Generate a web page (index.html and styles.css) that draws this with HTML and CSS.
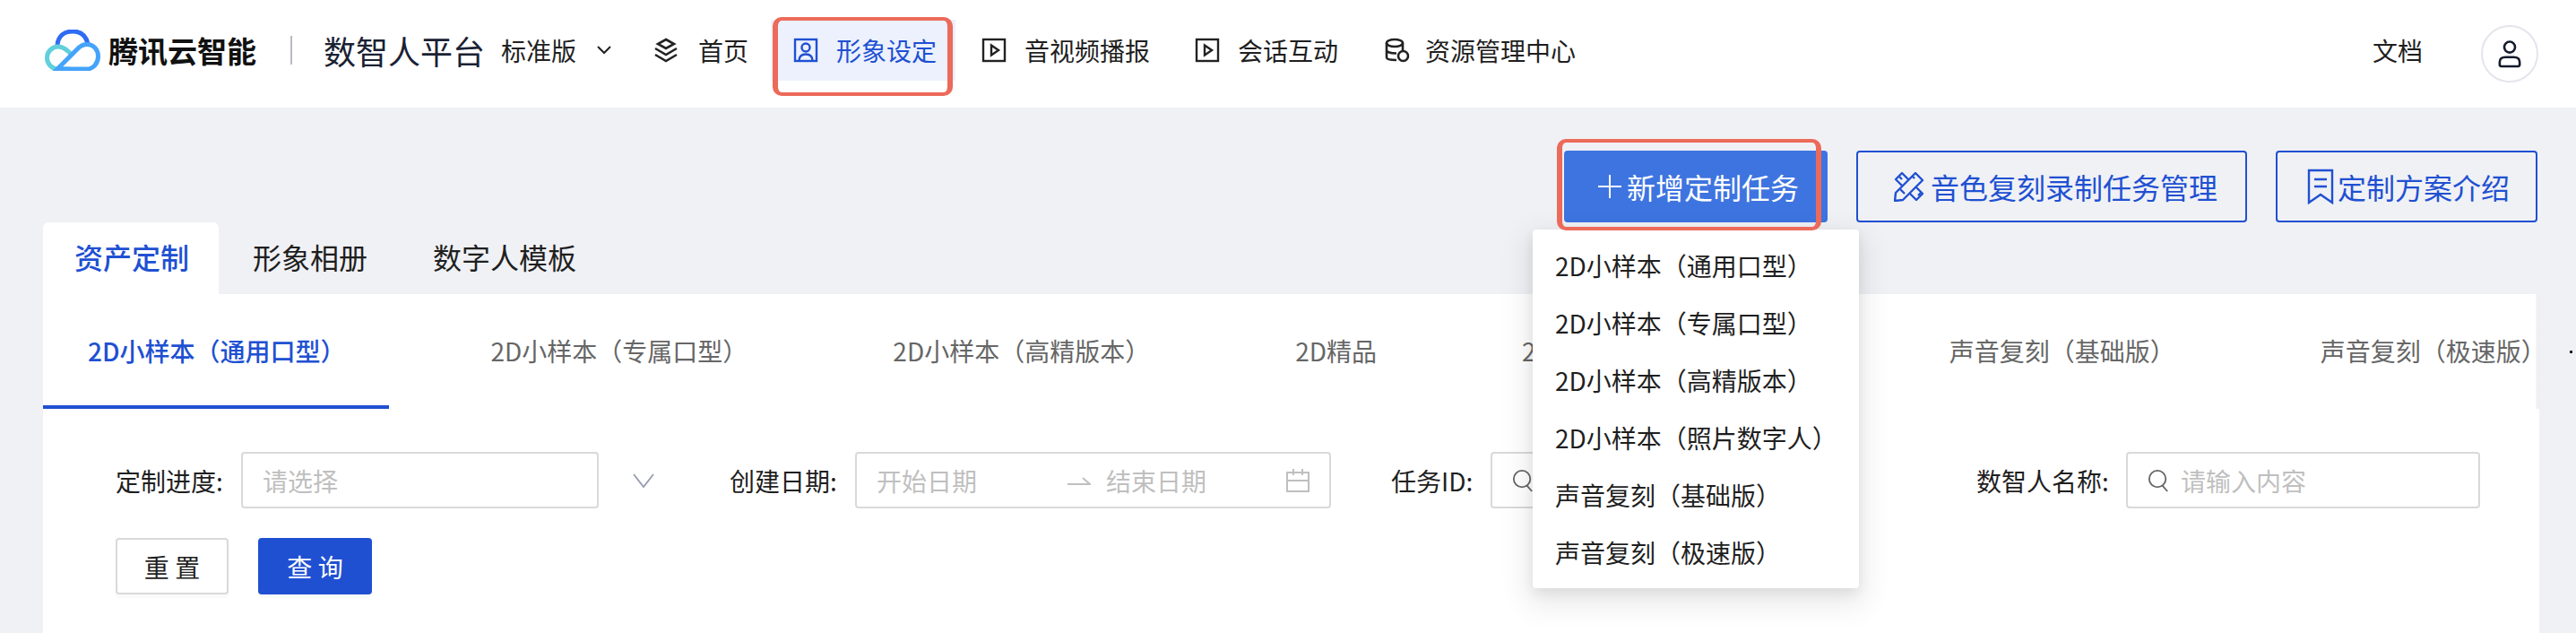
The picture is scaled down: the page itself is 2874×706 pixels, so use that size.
FILE: index.html
```html
<!DOCTYPE html>
<html lang="zh-CN">
<head>
    <meta charset="UTF-8">
    <title>数智人平台 - 形象设定</title>
    <link rel="stylesheet" href="styles.css">
</head>
<body>
    <!-- Top navigation -->
    <header class="topbar">
        <div class="brand">
            <svg class="brand-logo" viewBox="0 0 62 46" width="62" height="46">
                <path d="M14 17C15 7 22 2 31 2s15 5 17 14" fill="none" stroke="#2f6cf3" stroke-width="5"/>
                <path d="M28 44H15C8 44 2.500 38.500 2.500 31.500S8 19 15 19c6 0 10 4 14 8" fill="none" stroke="#62cfdc" stroke-width="5"/>
                <path d="M14 44 37 21c3-3 6-4.500 10-4.500 7.500 0 12.500 6 12.500 13.500S54 44 47 44H14z" fill="none" stroke="#45a3fb" stroke-width="5"/>
            </svg>
            <span class="brand-name">腾讯云智能</span>
            <span class="brand-sep"></span>
            <span class="brand-product">数智人平台</span>
            <span class="brand-edition">标准版</span>
            <svg class="brand-caret" viewBox="0 0 16 10" width="16" height="10"><path d="M1 1l7 7 7-7" fill="none" stroke="#222" stroke-width="2"/></svg>
        </div>
        <nav class="nav">
            <a class="nav-item nav-home">
                <svg viewBox="0 0 28 28" width="28" height="28" fill="none" stroke="#222" stroke-width="2.600"><path d="M14 2l9 5-9 5-9-5z"/><path d="M2 12l12 7 12-7M2 19l12 7 12-7"/></svg>
                首页
            </a>
            <a class="nav-item nav-active">
                <svg viewBox="0 0 28 28" width="28" height="28" fill="none" stroke="#2050d2" stroke-width="2.400"><rect x="2" y="2" width="24" height="24"/><circle cx="14" cy="11" r="4.500"/><path d="M6.500 26c0-5 3-7.500 7.500-7.500s7.500 2.500 7.500 7.500"/></svg>
                形象设定
            </a>
            <a class="nav-item nav-media">
                <svg viewBox="0 0 28 28" width="28" height="28" fill="none" stroke="#222" stroke-width="2.400"><rect x="2" y="2" width="24" height="24"/><path d="M11 8.500l8 5.500-8 5.500z"/></svg>
                音视频播报
            </a>
            <a class="nav-item nav-chat">
                <svg viewBox="0 0 28 28" width="28" height="28" fill="none" stroke="#222" stroke-width="2.400"><rect x="2" y="2" width="24" height="24"/><path d="M11 8.500l8 5.500-8 5.500z"/></svg>
                会话互动
            </a>
            <a class="nav-item nav-assets">
                <svg viewBox="0 0 28 28" width="28" height="28" fill="none" stroke="#222" stroke-width="2.600"><ellipse cx="11" cy="6" rx="9" ry="4"/><path d="M2 6v16c0 2 3 3 11 3M20 6v8M2 14c0 2 4 3.500 11 3.500"/><circle cx="20.500" cy="20.500" r="5.500"/></svg>
                资源管理中心
            </a>
        </nav>
        <a class="doc-link">文档</a>
        <div class="avatar">
            <svg viewBox="0 0 28 34" width="26" height="32" fill="none" stroke="#141b2d" stroke-width="2.800"><circle cx="14" cy="9" r="6.500"/><path d="M4 32h20c1.500 0 2-1 2-2v-3c0-4-3-6-7-6H9c-4 0-7 2-7 6v3c0 1 .500 2 2 2z"/></svg>
        </div>
    </header>

    <main class="page">
        <!-- Action buttons -->
        <div class="actions">
            <button class="action-btn action-primary">
                <svg viewBox="0 0 26 26" width="26" height="26"><path d="M13 0v26M0 13h26" stroke="#fff" stroke-width="2" fill="none"/></svg>
                新增定制任务
            </button>
            <button class="action-btn action-repair">
                <svg viewBox="0 0 34 34" width="34" height="34" fill="none" stroke="#2050d2" stroke-width="2.400" stroke-linejoin="round">
                    <path d="M9.500 16.500 2 9l7-7 7.500 7.500M17.500 24.500 25 32l7-7-7.500-7.500"/>
                    <path d="M2 24 24 2l8 8-22 22-9 1z"/>
                    <path d="M6 6l3 3M27 27l3-3M7 20l5 5M21 6l2 2"/>
                </svg>
                音色复刻录制任务管理
            </button>
            <button class="action-btn action-intro">
                <svg viewBox="0 0 30 40" width="30" height="40" fill="none" stroke="#2050d2" stroke-width="2.400"><path d="M2 2h26v36l-13-9-13 9z"/><path d="M8 12h14M8 20h14"/></svg>
                定制方案介绍
            </button>
        </div>

        <!-- Outer tabs -->
        <div class="tabs">
            <a class="tab tab-active">资产定制</a>
            <a class="tab tab-album">形象相册</a>
            <a class="tab">数字人模板</a>
        </div>

        <section class="card">
            <div class="subtabs">
                <a class="subtab subtab-active">2D小样本（通用口型）</a>
                <a class="subtab">2D小样本（专属口型）</a>
                <a class="subtab">2D小样本（高精版本）</a>
                <a class="subtab">2D精品</a>
                <a class="subtab">2D小样本（照片数字人）</a>
                <a class="subtab">声音复刻（基础版）</a>
                <a class="subtab">声音复刻（极速版）</a>
                <span class="subtabs-more"></span>
            </div>

            <!-- Filter form -->
            <form class="filters">
                <div class="filter-row">
                    <label class="field field-progress">
                        <span class="field-label">定制进度:</span>
                        <span class="control control-select"><span class="placeholder">请选择</span></span>
                        <svg class="select-caret" viewBox="0 0 24 16" width="24" height="16"><path d="M1 1l11 14L23 1" fill="none" stroke="#9aa0b0" stroke-width="2"/></svg>
                    </label>
                    <label class="field field-date">
                        <span class="field-label">创建日期:</span>
                        <span class="control control-range">
                            <span class="placeholder range-start">开始日期</span>
                            <svg class="range-arrow" viewBox="0 0 26 10" width="26" height="10"><path d="M0 9h25L17 2" fill="none" stroke="#bfbfbf" stroke-width="2"/></svg>
                            <span class="placeholder range-end">结束日期</span>
                            <svg class="range-cal" viewBox="0 0 26 26" width="26" height="26" fill="none" stroke="#bfbfbf" stroke-width="2"><rect x="1" y="4" width="24" height="21"/><path d="M1 13h24M8 0v7M18 0v7"/></svg>
                        </span>
                    </label>
                    <label class="field field-task">
                        <span class="field-label">任务ID:</span>
                        <span class="control control-search">
                            <svg viewBox="0 0 26 28" width="24" height="26" fill="none" stroke="#666" stroke-width="2"><circle cx="12" cy="12" r="10"/><path d="M18 20l6 7"/></svg>
                            <span class="placeholder">请输入内容</span>
                        </span>
                    </label>
                    <label class="field field-name">
                        <span class="field-label">数智人名称:</span>
                        <span class="control control-search">
                            <svg viewBox="0 0 26 28" width="24" height="26" fill="none" stroke="#666" stroke-width="2"><circle cx="12" cy="12" r="10"/><path d="M18 20l6 7"/></svg>
                            <span class="placeholder">请输入内容</span>
                        </span>
                    </label>
                </div>
                <div class="filter-buttons">
                    <button type="button" class="form-btn">重 置</button>
                    <button type="button" class="form-btn form-btn-primary">查 询</button>
                </div>
            </form>
        </section>
    </main>

    <!-- Overlays: dropdown menu and the red annotation boxes -->
    <ul class="menu">
        <li>2D小样本（通用口型）</li>
        <li>2D小样本（专属口型）</li>
        <li>2D小样本（高精版本）</li>
        <li>2D小样本（照片数字人）</li>
        <li>声音复刻（基础版）</li>
        <li>声音复刻（极速版）</li>
    </ul>
    <div class="mark mark-nav"></div>
    <div class="mark mark-add"></div>
</body>
</html>
```

FILE: styles.css
```css
:root {
    --blue: #2050d2;
    --page-bg: #f0f1f5;
    --text: #1f1f1f;
    --line: #d9d9d9;
    --mark: #ec6a5a;
}

* {
    box-sizing: border-box;
}

html, body {
    height: 100%;
}

body {
    margin: 0;
    overflow: hidden;
    position: relative;
    background-color: var(--page-bg);
    color: var(--text);
    font-family: "Noto Sans CJK SC", "Noto Sans", sans-serif;
    font-size: 28px;
    line-height: 40px;
}

/* Top navigation */
.topbar {
    display: flex;
    align-items: center;
    height: 120px;
    padding: 0 42px 8px 50px;
    background-color: #fff;
}

.brand {
    display: flex;
    align-items: center;
    width: 679px;
}

.brand-logo {
    flex: none;
}

.brand-name {
    margin-left: 9px;
    font-size: 33px;
    font-weight: 700;
    color: #111;
}

.brand-sep {
    width: 2px;
    height: 32px;
    margin: 0 35px 0 38px;
    background-color: #b9bbc0;
}

.brand-product {
    font-size: 36px;
    color: #1a2233;
}

.brand-edition {
    margin-left: 18px;
    color: #222;
}

.brand-caret {
    margin-left: 23px;
}

.nav {
    display: flex;
    align-items: center;
    height: 68px;
    flex: 1;
}

.nav-item {
    display: flex;
    align-items: center;
    gap: 20px;
    height: 68px;
}

.nav-home {
    width: 131px;
    gap: 22px;
}

.nav-active {
    width: 206px;
    padding-left: 25px;
    color: var(--blue);
    background-color: #ecf1fd;
}

.nav-media {
    width: 267px;
    padding-left: 29px;
}

.nav-chat {
    width: 212px;
}

.nav-assets {
    gap: 17px;
}

.doc-link {
    margin-right: 65px;
}

.avatar {
    display: flex;
    align-items: center;
    justify-content: center;
    width: 64px;
    height: 64px;
    margin-top: 8px;
    border: 2px solid #e4e5ec;
    border-radius: 50%;
}

/* Page body */
.page {
    padding: 48px 41px 0 48px;
}

.actions {
    display: flex;
    justify-content: flex-end;
    gap: 32px;
    margin-right: 2px;
}

.action-btn {
    display: flex;
    align-items: center;
    height: 80px;
    border: 2px solid var(--blue);
    border-radius: 4px;
    background: transparent;
    color: var(--blue);
    font: inherit;
    font-size: 32px;
}

.action-primary {
    width: 294px;
    gap: 6px;
    padding: 0 0 0 38px;
    border: none;
    color: #fff;
    background-color: #3e74e0;
}

.action-repair {
    width: 436px;
    gap: 7px;
    padding: 0 0 0 40px;
}

.action-intro {
    width: 292px;
    gap: 4px;
    padding: 0 0 0 33px;
}

/* Outer tabs */
.tabs {
    display: flex;
    height: 80px;
    font-size: 32px;
}

.tab {
    display: flex;
    align-items: center;
    padding-left: 38px;
    padding-bottom: 4px;
    border-radius: 6px 6px 0 0;
}

.tab-active {
    width: 196px;
    padding-left: 35px;
    color: var(--blue);
    font-weight: 500;
    background-color: #fff;
}

.tab-album {
    width: 201px;
}

.card {
    position: relative;
    height: 378px;
    background-color: #fff;
}

/* Inner tabs */
.subtabs {
    position: relative;
    display: flex;
    align-items: center;
    gap: 162px;
    height: 128px;
    padding: 0 0 2px 50px;
    color: #666;
    white-space: nowrap;
}

.subtab-active {
    color: var(--blue);
    font-weight: 500;
}

.subtab-active::after {
    content: "";
    position: absolute;
    left: 0;
    bottom: 0;
    width: 386px;
    height: 4px;
    background-color: var(--blue);
}

.subtabs-more {
    position: absolute;
    top: 0;
    right: 0;
    width: 4px;
    height: 128px;
    background: linear-gradient(to right, #f4f4f6, #eeeef1);
}

.subtabs-more::after {
    content: "";
    position: absolute;
    top: 63px;
    left: 38px;
    width: 3px;
    height: 3px;
    background-color: #222;
}

/* Filter form */
.filters {
    padding: 48px 0 0 81px;
}

.filter-row {
    display: flex;
}

.field {
    display: flex;
    align-items: center;
    height: 63px;
}

.field-label {
    width: 140px;
    white-space: nowrap;
}

.control {
    display: flex;
    align-items: center;
    height: 63px;
    padding: 0 22px;
    border: 2px solid var(--line);
    border-radius: 4px;
}

.placeholder {
    color: #bfbfbf;
}

.control-select {
    width: 399px;
}

.select-caret {
    margin-left: 38px;
}

.field-progress {
    width: 685px;
}

.field-date {
    width: 738px;
}

.control-range {
    width: 531px;
}

.range-arrow {
    margin: 0 17px 0 101px;
}

.range-cal {
    margin-left: auto;
}

.field-task {
    width: 653px;
}

.field-task .field-label {
    width: 111px;
}

.field-task .control {
    width: 400px;
}

.field-name .field-label {
    width: 167px;
}

.control-search {
    width: 395px;
    gap: 13px;
}

.filter-buttons {
    display: flex;
    gap: 33px;
    margin-top: 33px;
}

.form-btn {
    width: 126px;
    height: 63px;
    border: 2px solid var(--line);
    border-radius: 4px;
    background-color: #fff;
    color: var(--text);
    font: inherit;
    box-shadow: 0 4px 0 rgba(0, 0, 0, 0.02);
}

.form-btn-primary {
    width: 127px;
    border-color: var(--blue);
    background-color: var(--blue);
    color: #fff;
}

/* Dropdown menu */
.menu {
    position: absolute;
    top: 256px;
    left: 1710px;
    width: 364px;
    margin: 0;
    padding: 8px 0;
    list-style: none;
    background-color: #fff;
    border-radius: 4px;
    box-shadow: 0 12px 32px 8px rgba(0, 0, 0, 0.08), 0 6px 14px rgba(0, 0, 0, 0.08);
}

.menu li {
    height: 64px;
    padding: 12px 0 0 25px;
    white-space: nowrap;
}

/* Red annotation boxes */
.mark {
    position: absolute;
    border-style: solid;
    border-color: var(--mark);
    border-width: 4px 6px;
    border-radius: 10px;
}

.mark-nav {
    top: 19px;
    left: 862px;
    width: 201px;
    height: 88px;
}

.mark-add {
    top: 155px;
    left: 1737px;
    width: 295px;
    height: 102px;
}
```
